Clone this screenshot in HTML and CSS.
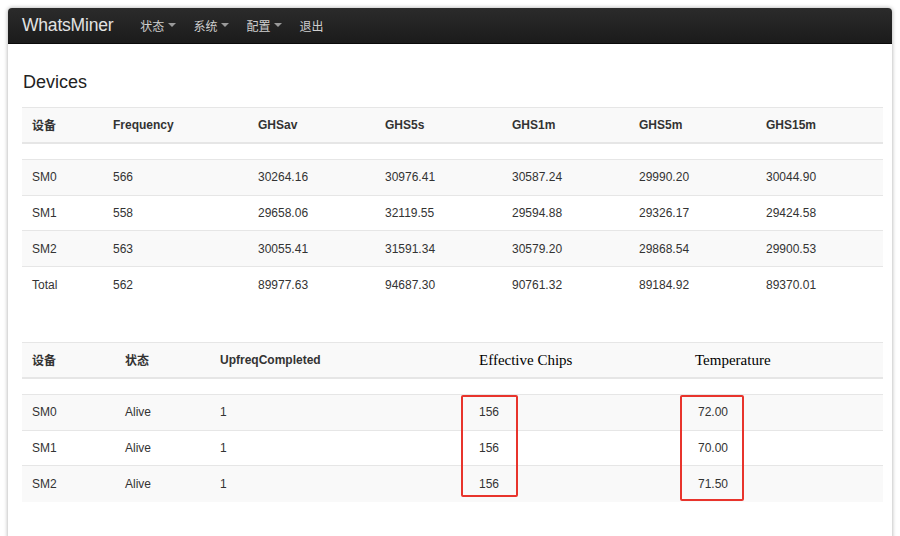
FILE: index.html
```html
<!DOCTYPE html>
<html>
<head>
<meta charset="utf-8">
<link rel="stylesheet" href="styles.css">
</head>
<body>
<div class="frame">
  <div class="card">
    <nav class="navbar">
      <span class="brand">WhatsMiner</span>
      <ul class="menu">
        <li>状态<span class="caret"></span></li>
        <li>系统<span class="caret"></span></li>
        <li>配置<span class="caret"></span></li>
        <li>退出</li>
      </ul>
    </nav>
    <main class="content">
      <h2 class="title">Devices</h2>
      <table class="grid grid-a">
        <thead>
          <tr><th>设备</th><th>Frequency</th><th>GHSav</th><th>GHS5s</th><th>GHS1m</th><th>GHS5m</th><th>GHS15m</th></tr>
        </thead>
        <tbody>
          <tr class="spacer"><td colspan="7"></td></tr>
          <tr><td>SM0</td><td>566</td><td>30264.16</td><td>30976.41</td><td>30587.24</td><td>29990.20</td><td>30044.90</td></tr>
          <tr><td>SM1</td><td>558</td><td>29658.06</td><td>32119.55</td><td>29594.88</td><td>29326.17</td><td>29424.58</td></tr>
          <tr><td>SM2</td><td>563</td><td>30055.41</td><td>31591.34</td><td>30579.20</td><td>29868.54</td><td>29900.53</td></tr>
          <tr><td>Total</td><td>562</td><td>89977.63</td><td>94687.30</td><td>90761.32</td><td>89184.92</td><td>89370.01</td></tr>
        </tbody>
      </table>
      <div class="marked">
        <table class="grid grid-b">
          <thead>
            <tr><th>设备</th><th>状态</th><th>UpfreqCompleted</th><th class="serif">Effective Chips</th><th class="serif">Temperature</th></tr>
          </thead>
          <tbody>
            <tr class="spacer"><td colspan="5"></td></tr>
            <tr><td>SM0</td><td>Alive</td><td>1</td><td>156</td><td class="temp">72.00</td></tr>
            <tr><td>SM1</td><td>Alive</td><td>1</td><td>156</td><td class="temp">70.00</td></tr>
            <tr><td>SM2</td><td>Alive</td><td>1</td><td>156</td><td class="temp">71.50</td></tr>
          </tbody>
        </table>
        <span class="mark mark-chips"></span>
        <span class="mark mark-temp"></span>
      </div>
    </main>
  </div>
</div>
</body>
</html>
```

FILE: styles.css
```css
html, body {
  margin: 0;
  padding: 0;
  background: #ffffff;
  height: 100%;
  overflow: hidden;
}
.frame {
  padding: 8px 8px 0 8px;
}
.card {
  background: #ffffff;
  box-shadow: 0 0 4px rgba(0, 0, 0, 0.35);
  border-radius: 4px 4px 0 0;
  min-height: 560px;
  font-family: "Liberation Sans", Arial, "Noto Sans CJK SC", sans-serif;
  color: #333333;
}
.navbar {
  height: 36px;
  display: flex;
  align-items: center;
  background: linear-gradient(#2b2b2b, #1b1b1b);
  border-radius: 4px 4px 0 0;
  border-bottom: 1px solid #0a0a0a;
  box-sizing: border-box;
  padding-left: 14px;
}
.brand {
  font-size: 17.5px;
  color: #e2e2e2;
  letter-spacing: -0.2px;
  margin-right: 27px;
}
.menu {
  list-style: none;
  margin: 0;
  padding: 0;
  display: flex;
  gap: 17px;
}
.menu li {
  font-family: "Noto Sans CJK SC", sans-serif;
  font-size: 12px;
  color: #cfcfcf;
  display: flex;
  align-items: center;
  padding-bottom: 1px;
}
.caret {
  display: inline-block;
  width: 0;
  height: 0;
  margin-left: 4px;
  border-left: 4px solid transparent;
  border-right: 4px solid transparent;
  border-top: 4px solid #9a9a9a;
}
.content {
  padding: 28px 9px 0 14px;
}
.title {
  margin: 0 0 15px 1px;
  font-size: 18px;
  line-height: 20px;
  font-weight: normal;
  color: #222222;
}
.grid {
  width: 100%;
  border-collapse: collapse;
  table-layout: fixed;
  font-size: 12px;
}
.grid th, .grid td {
  text-align: left;
  padding: 0 10px;
  height: 35.67px;
  box-sizing: border-box;
  vertical-align: middle;
}
.grid th {
  font-weight: bold;
  color: #333333;
  height: 35px;
}
.grid thead tr {
  background: #f9f9f9;
  border-top: 1px solid #e6e6e6;
  border-bottom: 2px solid #e6e6e6;
}
.grid tbody tr {
  border-top: 1px solid #e6e6e6;
}
.grid tbody tr.spacer td {
  height: 17px;
  border-bottom: 1px solid #e6e6e6;
}
.grid tbody tr:nth-child(even) {
  background: #f9f9f9;
}
.grid-a th:nth-child(1) { width: 81px; }
.grid-a th:nth-child(2) { width: 145px; }
.grid-a th:nth-child(3),
.grid-a th:nth-child(4),
.grid-a th:nth-child(5),
.grid-a th:nth-child(6) { width: 127px; }
.marked {
  position: relative;
  margin-top: 40px;
}
.grid-b th:nth-child(1) { width: 93px; }
.grid-b th:nth-child(2) { width: 95px; }
.grid-b th:nth-child(3) { width: 259px; }
.grid-b th:nth-child(4) { width: 216px; }
.grid-b th.serif {
  font-family: "Liberation Serif", "Times New Roman", serif;
  font-size: 15px;
  font-weight: normal;
  color: #000000;
  padding-top: 2px;
}
.grid-b td.temp {
  padding-left: 13px;
}
.mark {
  position: absolute;
  border: 2px solid #e8342c;
  border-radius: 2px;
  box-sizing: border-box;
}
.mark-chips {
  left: 439px;
  top: 53px;
  width: 57px;
  height: 102px;
}
.mark-temp {
  left: 658px;
  top: 53px;
  width: 64px;
  height: 106px;
}
```
